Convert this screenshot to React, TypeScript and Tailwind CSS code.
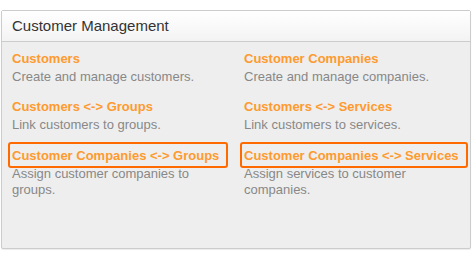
import { FC } from "react";

type Item = {
    title: string;
    desc: string;
    highlight?: boolean;
    boxWidth?: string;
};

const items: Item[] = [
    { title: "Customers", desc: "Create and manage customers." },
    { title: "Customer Companies", desc: "Create and manage companies." },
    { title: "Customers <-> Groups", desc: "Link customers to groups." },
    { title: "Customers <-> Services", desc: "Link customers to services." },
    { title: "Customer Companies <-> Groups", desc: "Assign customer companies to groups.", highlight: true, boxWidth: "w-[220px]" },
    { title: "Customer Companies <-> Services", desc: "Assign services to customer companies.", highlight: true, boxWidth: "w-[228px]" },
];

const AdminItem: FC<{ item: Item }> = ({ item }) => {
    return (
        <div className="flex flex-col">
            <div
                className={`-ml-[4px] px-[2px] pt-[3px] pb-[1px] border-2 rounded-[3px] leading-[18px] text-[13px] font-bold text-[#ff9a2e] ${item.highlight ? `border-[#ff6a00] ${item.boxWidth}` : "border-transparent"}`}
            >
                {item.title}
            </div>
            <span className="-mt-[2px] w-[200px] text-[13px] leading-[16px] text-[#888888]">{item.desc}</span>
        </div>
    );
};

const App: FC = () => {
    return (
        <div className="w-[476px] h-[254px] bg-white pt-[10px] pl-[1px]" style={{ fontFamily: '"Liberation Sans", Arial, sans-serif' }}>
            <div className="w-[470px] h-[239px] border border-[#cccccc] rounded-[2px] bg-[#eeeeee] flex flex-col shadow-[0_1px_1px_rgba(0,0,0,0.08)]">
                <div className="h-[31px] border-b border-[#cccccc] bg-gradient-to-b from-white to-[#f3f3f3] flex items-center px-[10px]">
                    <span className="text-[15px] text-[#333333]">Customer Management</span>
                </div>
                <div className="grid grid-cols-[232px_1fr] gap-y-[8px] px-[10px] pt-[3px]">
                    {items.map((item, i) => (
                        <div key={item.title} className={i >= 4 ? "mt-[1px]" : ""}>
                            <AdminItem item={item} />
                        </div>
                    ))}
                </div>
            </div>
        </div>
    );
};

export default App;
